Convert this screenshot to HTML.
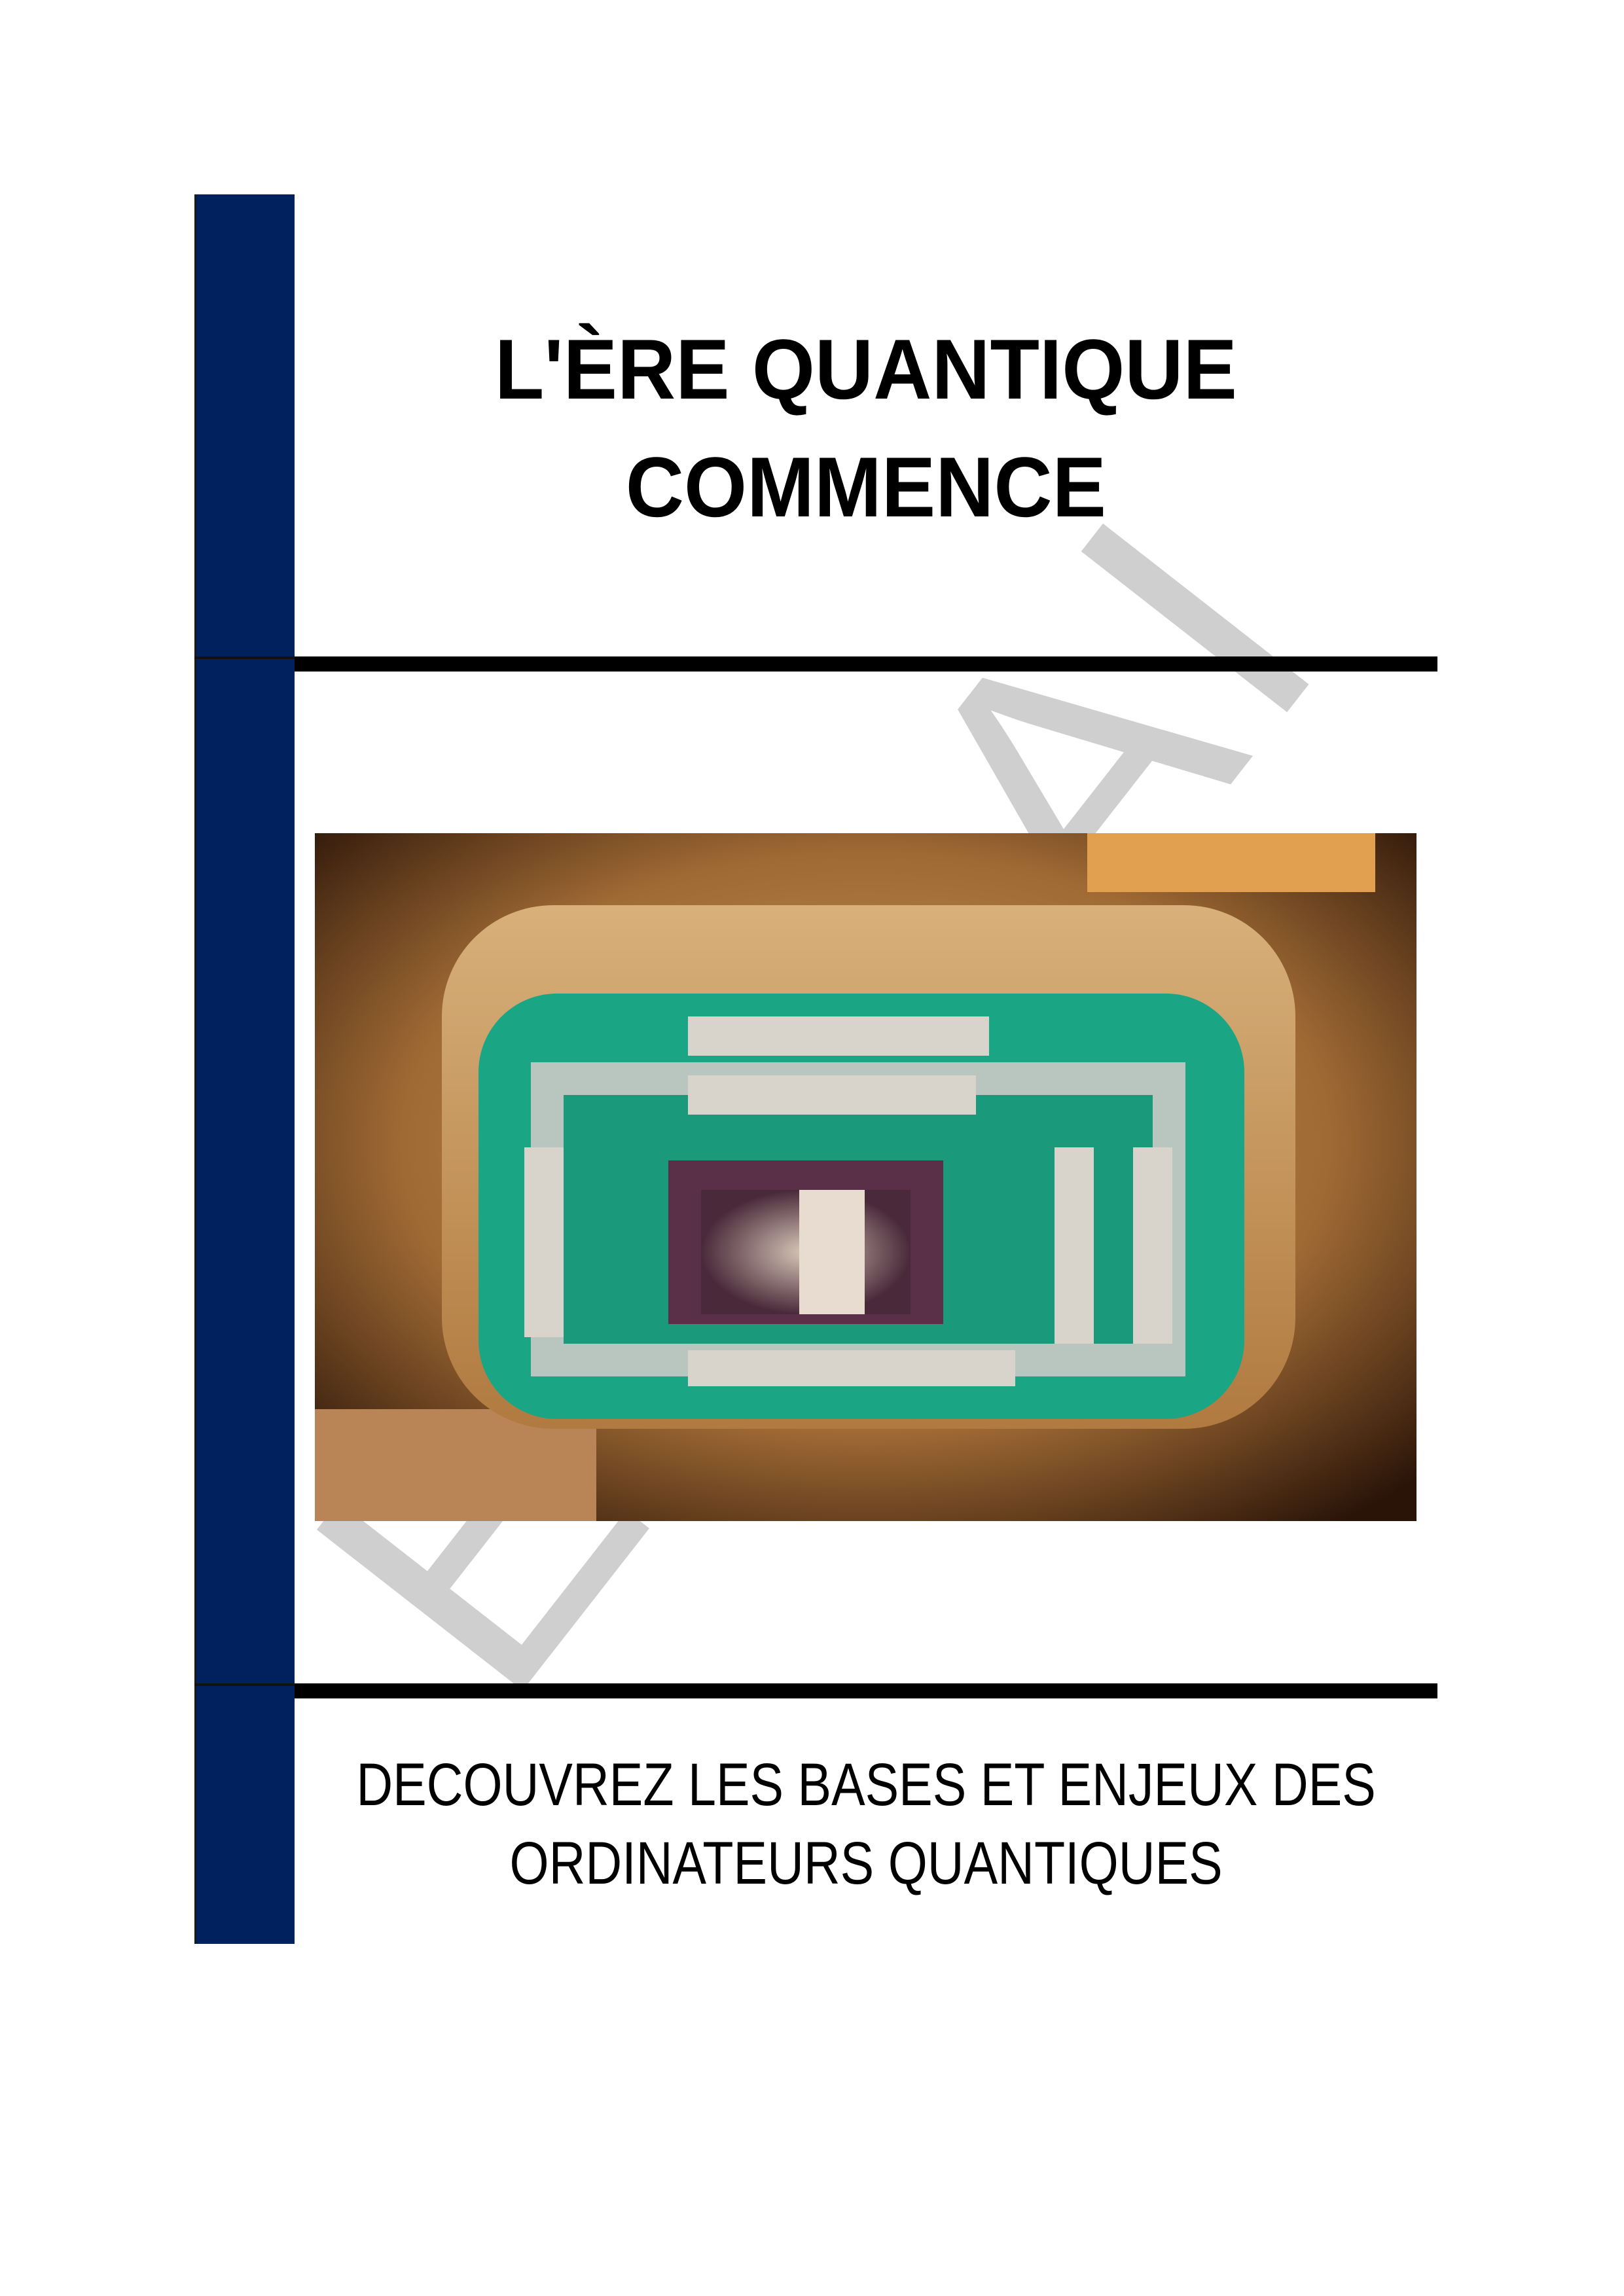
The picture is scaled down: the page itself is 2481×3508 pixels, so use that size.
<!DOCTYPE html>
<html><head><meta charset="utf-8"><style>
html,body{margin:0;padding:0;background:#fff}
body{width:2481px;height:3508px;position:relative;overflow:hidden;font-family:"Liberation Sans",sans-serif}
.abs{position:absolute}
.t{left:-500px;width:3646px;text-align:center;color:#000;white-space:nowrap}
</style></head><body>
<svg class="abs" style="left:0;top:0" width="2481" height="3508">
<text x="0" y="0" transform="translate(1410,1800) rotate(-52)" font-family="Liberation Sans" font-size="580" fill="#cfcfcf" text-anchor="middle" letter-spacing="30">EMA AI</text>
</svg>
<div class="abs" style="left:297px;top:297px;width:153px;height:2673px;background:#00205e;border-left:3px solid #1a1a1a;box-sizing:border-box"></div>
<div class="abs" style="left:297px;top:1003px;width:153px;height:4px;background:#111"></div>
<div class="abs" style="left:297px;top:2572px;width:153px;height:4px;background:#111"></div>
<div class="abs" style="left:450px;top:1003px;width:1746px;height:23px;background:#000"></div>
<div class="abs" style="left:450px;top:2572px;width:1746px;height:23px;background:#000"></div>
<div class="abs t" style="top:474px;font-size:130px;font-weight:bold;line-height:180px"><span style="display:inline-block;transform:scaleX(0.95)">L'ÈRE QUANTIQUE<br>COMMENCE</span></div>
<div class="abs t" style="top:2667px;font-size:92px;line-height:120px"><span style="display:inline-block;transform:scaleX(0.84)">DECOUVREZ LES BASES ET ENJEUX DES<br>ORDINATEURS QUANTIQUES</span></div>
<svg class="abs" style="left:481px;top:1273px" width="1683" height="1051" viewBox="0 0 1683 1051">
<defs>
<radialGradient id="br" cx="0.5" cy="0.45" r="0.7"><stop offset="0" stop-color="#c79a5e"/><stop offset="0.6" stop-color="#a06a34"/><stop offset="1" stop-color="#2a1408"/></radialGradient>
<linearGradient id="rim" x1="0" y1="0" x2="0" y2="1"><stop offset="0" stop-color="#d8b07a"/><stop offset="1" stop-color="#b07a40"/></linearGradient>
<radialGradient id="ch" cx="0.5" cy="0.5" r="0.5"><stop offset="0" stop-color="#d8c8b8"/><stop offset="1" stop-color="#4a2a3a"/></radialGradient>
</defs>
<rect width="1683" height="1051" fill="url(#br)"/>
<rect x="1180" y="0" width="440" height="90" fill="#e0a050"/>
<rect x="0" y="880" width="430" height="171" fill="#b98556"/>
<rect x="194" y="110" width="1304" height="800" rx="170" fill="url(#rim)"/>
<rect x="250" y="245" width="1170" height="650" rx="120" fill="#1aa585"/>
<rect x="330" y="350" width="1000" height="480" fill="#b9c5bf"/>
<rect x="380" y="400" width="900" height="380" fill="#1a9a7a"/>
<g fill="#d8d4cc">
<rect x="570" y="280" width="460" height="60"/>
<rect x="570" y="370" width="440" height="60"/>
<rect x="570" y="790" width="500" height="55"/>
<rect x="320" y="480" width="60" height="290"/>
<rect x="1130" y="480" width="60" height="300"/>
<rect x="1250" y="480" width="60" height="300"/>
</g>
<rect x="540" y="500" width="420" height="250" fill="#5a3048"/>
<rect x="590" y="545" width="320" height="190" fill="url(#ch)"/>
<rect x="740" y="545" width="100" height="190" fill="#e8dcd0"/>
</svg>
</body></html>
